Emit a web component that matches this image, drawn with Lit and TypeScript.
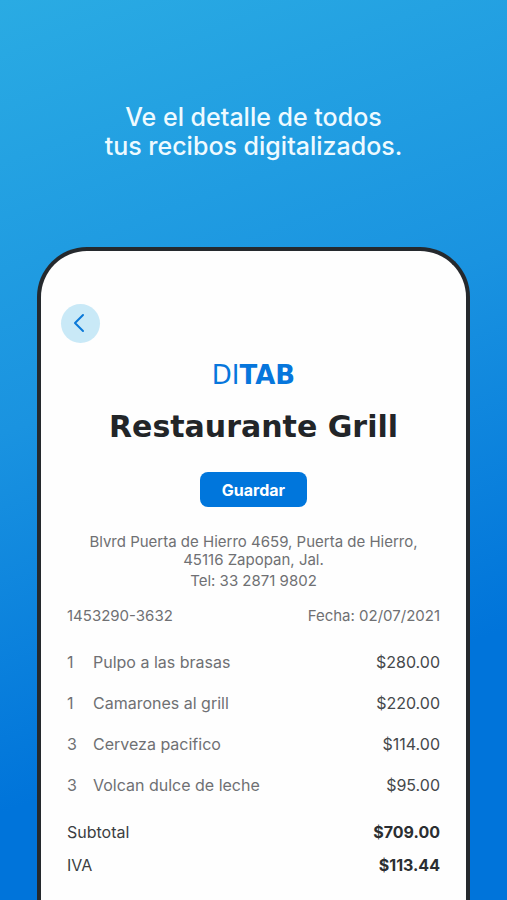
import { LitElement, html, css } from "lit";
import { customElement } from "lit/decorators.js";

interface Item {
  qty: number;
  name: string;
  price: string;
}

const items: Item[] = [
  { qty: 1, name: "Pulpo a las brasas", price: "$280.00" },
  { qty: 1, name: "Camarones al grill", price: "$220.00" },
  { qty: 3, name: "Cerveza pacifico", price: "$114.00" },
  { qty: 3, name: "Volcan dulce de leche", price: "$95.00" },
];

const totals = [
  { label: "Subtotal", amount: "$709.00" },
  { label: "IVA", amount: "$113.44" },
];

@customElement("receipt-screen")
export class ReceiptScreen extends LitElement {
  static styles = css`
    :host {
      display: flex;
      flex-direction: column;
      box-sizing: border-box;
      padding: 53px 20px 16px;
      border: 4px solid #25292d;
      border-bottom: 0;
      border-radius: 50px 50px 0 0;
      background: #fefefe;
      color: #6f7073;
      font-size: 16px;
      line-height: 20px;
    }
    .back {
      display: grid;
      place-items: center;
      width: 39px;
      height: 39px;
      padding: 0;
      border: 0;
      border-radius: 50%;
      background: #c9e9f7;
      cursor: pointer;
    }
    .back svg {
      width: 39px;
      height: 39px;
      fill: none;
      stroke: #0a78d8;
      stroke-width: 2;
      stroke-linecap: round;
      stroke-linejoin: round;
    }
    .head {
      display: flex;
      flex-direction: column;
      align-items: center;
      padding-top: 18px;
      text-align: center;
    }
    .brand {
      color: #0676dc;
      font: 400 26px/28px "DejaVu Sans", sans-serif;
    }
    .brand b {
      font-weight: 700;
    }
    .name {
      margin: 20px 0 27px;
      color: #222528;
      font: 700 30px/36px "DejaVu Sans", sans-serif;
      white-space: nowrap;
    }
    .save {
      height: 35px;
      padding: 0 22px;
      border: 0;
      border-radius: 8px;
      background: #0076dc;
      color: #fff;
      font: 700 16px/20px Inter, sans-serif;
      cursor: pointer;
    }
    .address,
    .phone,
    .meta {
      font-size: 15px;
      line-height: 18px;
    }
    .address {
      margin: 26px 0 0;
    }
    .phone {
      margin: 3px 0 0;
    }
    .meta {
      display: flex;
      justify-content: space-between;
      margin: 17px 6px 0;
    }
    table {
      width: 100%;
      border-collapse: collapse;
    }
    th,
    td {
      padding: 0;
      font-weight: 400;
      text-align: left;
    }
    th:first-child,
    td:first-child {
      padding-left: 6px;
    }
    th:last-child,
    td:last-child {
      padding-right: 6px;
    }
    .items {
      margin-top: 16px;
    }
    .items td {
      height: 41px;
    }
    .items .qty {
      width: 26px;
    }
    .items .price,
    .totals .amount {
      color: #45484b;
      text-align: right;
    }
    .totals {
      margin-top: 10px;
      color: #3c3f42;
    }
    .totals th {
      height: 33px;
    }
    .totals .amount {
      color: #2b2e31;
      font-weight: 700;
    }
  `;

  render() {
    return html`
      <button class="back" type="button" aria-label="Volver">
        <svg viewBox="0 0 39 39"><path d="M22 11 14 19 22 27" /></svg>
      </button>
      <header class="head">
        <div class="brand">DI<b>TAB</b></div>
        <h2 class="name">Restaurante Grill</h2>
        <button class="save" type="button">Guardar</button>
        <p class="address">
          Blvrd Puerta de Hierro 4659, Puerta de Hierro,<br />45116 Zapopan, Jal.
        </p>
        <p class="phone">Tel: 33 2871 9802</p>
      </header>
      <div class="meta"><span>1453290-3632</span><span>Fecha: 02/07/2021</span></div>
      <table class="items">
        <tbody>
          ${items.map(
            (i) => html`<tr>
              <td class="qty">${i.qty}</td>
              <td>${i.name}</td>
              <td class="price">${i.price}</td>
            </tr>`
          )}
        </tbody>
      </table>
      <table class="totals">
        <tbody>
          ${totals.map(
            (t) => html`<tr>
              <th scope="row">${t.label}</th>
              <td class="amount">${t.amount}</td>
            </tr>`
          )}
        </tbody>
      </table>
    `;
  }
}

@customElement("app-root")
export class AppRoot extends LitElement {
  static styles = css`
    :host {
      display: flex;
      flex-direction: column;
      box-sizing: border-box;
      min-height: 100vh;
      padding: 0 37px;
      background: linear-gradient(160deg, #2aabe3 0%, #1a93e0 40%, #0074da 75%, #0074da 100%);
      font-family: Inter, sans-serif;
    }
    .lead {
      margin: 103px 0 86px;
      color: #eefaff;
      font-size: 25px;
      font-weight: 500;
      line-height: 29px;
      text-align: center;
    }
    receipt-screen {
      flex: 1;
    }
  `;

  render() {
    return html`
      <h1 class="lead">Ve el detalle de todos<br />tus recibos digitalizados.</h1>
      <receipt-screen></receipt-screen>
    `;
  }
}
